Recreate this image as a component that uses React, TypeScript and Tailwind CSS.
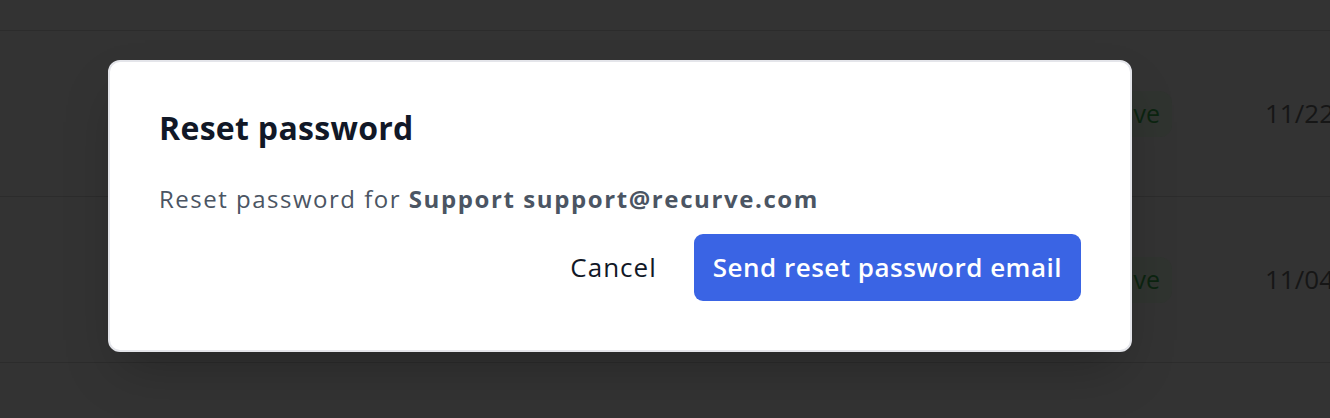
const rows = [
  { date: '11/22/2023' },
  { date: '11/04/2023' },
];

const Row = ({ date }: { date: string }) => (
  <div className="flex h-[166px] shrink-0 items-center border-b border-[#2c2c2c]">
    <div className="w-[1062px] shrink-0" />
    <div className="flex h-[46px] w-[110px] shrink-0 items-center justify-end rounded-[12px] bg-[#303430] pr-[12px] text-[25px] text-[#0c2410]">
      Active
    </div>
    <div className="ml-[93px] shrink-0 whitespace-nowrap text-[26px] text-[#161616]">{date}</div>
  </div>
);

export default function App() {
  return (
    <div
      className="relative h-[418px] w-[1330px] overflow-hidden bg-[#333333]"
      style={{ fontFamily: '"Open Sans", "Noto Sans", sans-serif' }}
    >
      <div className="flex flex-col">
        <div className="h-[31px] shrink-0 border-b border-[#2c2c2c]" />
        {rows.map((r) => (
          <Row key={r.date} date={r.date} />
        ))}
      </div>

      {/* Dialog */}
      <div className="absolute left-[108px] top-[60px] flex h-[292px] w-[1024px] flex-col rounded-[12px] border-2 border-[#e4e5ea] bg-white px-[49px] pt-[45px] shadow-2xl">
        <h2 className="text-[32px] font-bold leading-[42px] tracking-[0.3px] text-[#111827]">Reset password</h2>
        <p className="mt-[35px] text-[24px] leading-[30px] tracking-[1.5px] text-[#4b5563]">
          Reset password for <span className="font-bold tracking-[1.6px]">Support support@recurve.com</span>
        </p>
        <div className="mt-[20px] flex items-center justify-end gap-[37px]">
          <button className="text-[26px] font-medium tracking-[1px] text-[#111827]">Cancel</button>
          <button className="h-[67px] rounded-[9px] bg-[#3a64e4] px-[19px] text-[26px] font-semibold tracking-[0.5px] text-white">
            Send reset password email
          </button>
        </div>
      </div>
    </div>
  );
}
